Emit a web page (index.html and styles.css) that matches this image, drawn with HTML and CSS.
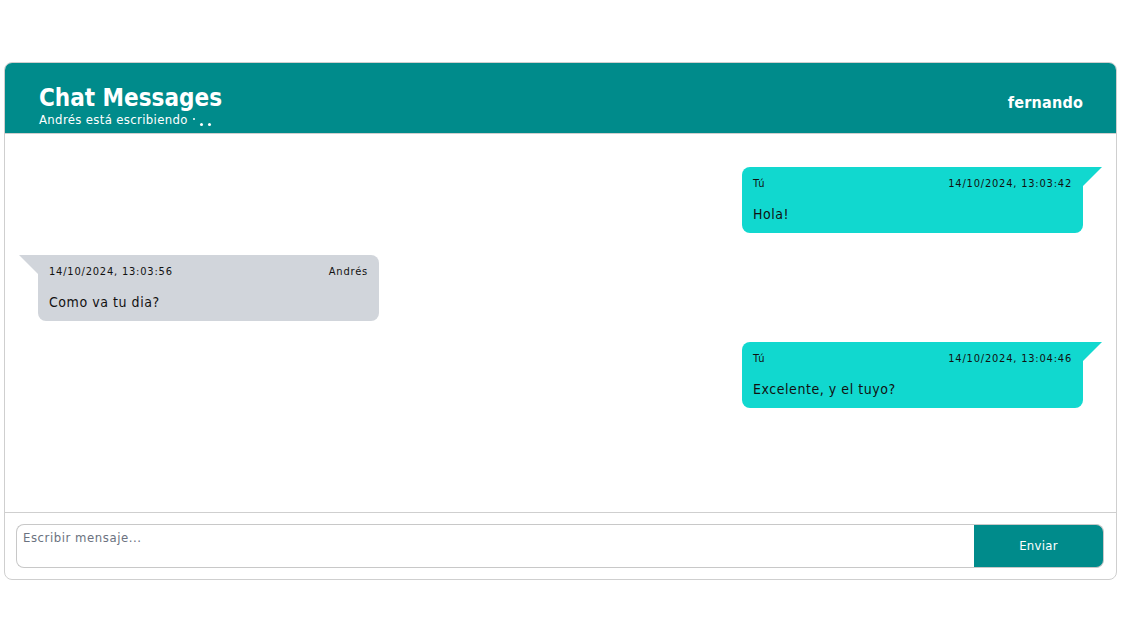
FILE: index.html
```html
<!DOCTYPE html>
<html lang="es">
<head>
<meta charset="utf-8">
<title>Chat Messages</title>
<link rel="stylesheet" href="styles.css">
</head>
<body>
<div class="chat">
  <header class="chat-header">
    <div class="title-block">
      <h1 class="title">Chat Messages</h1>
      <div class="typing">Andrés está escribiendo <span class="dot dot-up"></span><span class="dot"></span><span class="dot"></span></div>
    </div>
    <div class="user">fernando</div>
  </header>
  <main class="messages">
    <div class="msg own">
      <div class="meta"><span>Tú</span><span>14/10/2024, 13:03:42</span></div>
      <div class="text">Hola!</div>
    </div>
    <div class="msg other">
      <div class="meta"><span>14/10/2024, 13:03:56</span><span>Andrés</span></div>
      <div class="text">Como va tu dia?</div>
    </div>
    <div class="msg own">
      <div class="meta"><span>Tú</span><span>14/10/2024, 13:04:46</span></div>
      <div class="text">Excelente, y el tuyo?</div>
    </div>
  </main>
  <footer class="composer">
    <textarea class="input" placeholder="Escribir mensaje..."></textarea>
    <button class="send">Enviar</button>
  </footer>
</div>
</body>
</html>
```
FILE: styles.css
```css
* { box-sizing: border-box; }
body {
  margin: 0;
  background: #fff;
  font-family: "DejaVu Sans Condensed", "DejaVu Sans", sans-serif;
}
.chat {
  margin: 62px 5px 0 4px;
  border: 1px solid #cfcfcf;
  border-radius: 8px;
  height: 518px;
  display: flex;
  flex-direction: column;
  overflow: hidden;
}
.chat-header {
  background: #008b8b;
  color: #fff;
  height: 71px;
  display: flex;
  justify-content: space-between;
  align-items: flex-start;
  padding: 21px 33px 0 34px;
  border-bottom: 1px solid #cfcfcf;
}
.title {
  margin: 0;
  font-size: 24px;
  line-height: 28px;
  font-weight: bold;
}
.typing {
  font-size: 13px;
  line-height: 14px;
  margin-top: 1px;
  letter-spacing: 0.35px;
  display: flex;
  align-items: flex-end;
}
.dot {
  width: 3px;
  height: 3px;
  background: #fff;
  border-radius: 50%;
  margin-left: 5px;
  margin-bottom: 1px;
}
.dot.dot-up {
  width: 2px; height: 2px;
  margin-left: 5px;
  margin-bottom: 7px;
}
.user {
  font-size: 16px;
  font-weight: bold;
  letter-spacing: 0.2px;
  margin-top: 9px;
}
.messages {
  flex: 1;
  display: flex;
  flex-direction: column;
  gap: 21.5px;
  padding: 33px 33px 0 33px;
  border-bottom: 1px solid #cfcfcf;
}
.msg {
  position: relative;
  width: 341px;
  height: 66px;
  border-radius: 0 0 8px 8px;
  padding: 10px 11px 0 11px;
  color: #111;
}
.msg.own {
  align-self: flex-end;
  background: #11d8cf;
  border-top-left-radius: 8px;
}
.msg.other {
  align-self: flex-start;
  background: #d1d5db;
  border-top-right-radius: 8px;
}
.msg.own::after {
  content: "";
  position: absolute;
  top: 0;
  right: -19px;
  border-top: 19px solid #11d8cf;
  border-right: 19px solid transparent;
}
.msg.other::before {
  content: "";
  position: absolute;
  top: 0;
  left: -19px;
  border-top: 19px solid #d1d5db;
  border-left: 19px solid transparent;
}
.meta {
  display: flex;
  justify-content: space-between;
  font-size: 11px;
  line-height: 14px;
  letter-spacing: 0.8px;
}
.text {
  margin-top: 15px;
  font-size: 14px;
  line-height: 16px;
  letter-spacing: 0.55px;
}
.composer {
  height: 66px;
  display: flex;
  padding: 11px 12px 11px 11px;
}
.input {
  flex: 1;
  height: 44px;
  border: 1px solid #c8c8c8;
  border-right: none;
  border-radius: 8px 0 0 8px;
  resize: none;
  padding: 5px 6px;
  font-family: "DejaVu Sans Condensed", "DejaVu Sans", sans-serif;
  font-size: 13px;
  letter-spacing: 0.55px;
  color: #333;
  outline: none;
}
.input::placeholder { color: #6b7280; }
.send {
  width: 130px;
  height: 44px;
  border: 1px solid #c8c8c8;
  border-left: none;
  border-radius: 0 8px 8px 0;
  background: #008b8b;
  color: #fff;
  font-family: "DejaVu Sans Condensed", "DejaVu Sans", sans-serif;
  font-size: 13px;
  letter-spacing: 0.3px;
  padding-top: 0;
}
```
